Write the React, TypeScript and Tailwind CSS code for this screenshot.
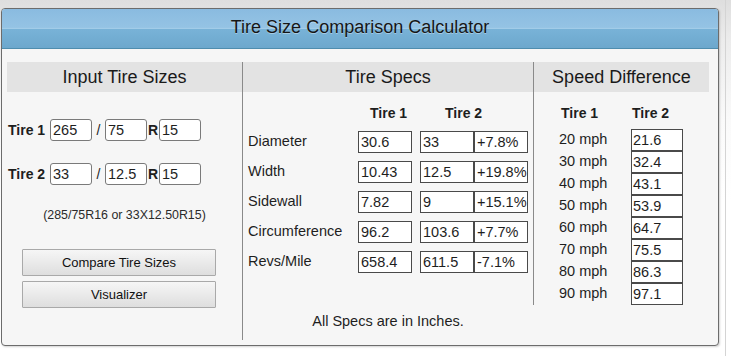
import React from "react";

const specs: [string, string, string, string][] = [
  ["Diameter", "30.6", "33", "+7.8%"],
  ["Width", "10.43", "12.5", "+19.8%"],
  ["Sidewall", "7.82", "9", "+15.1%"],
  ["Circumference", "96.2", "103.6", "+7.7%"],
  ["Revs/Mile", "658.4", "611.5", "-7.1%"],
];

const speeds: [string, string][] = [
  ["20", "21.6"],
  ["30", "32.4"],
  ["40", "43.1"],
  ["50", "53.9"],
  ["60", "64.7"],
  ["70", "75.5"],
  ["80", "86.3"],
  ["90", "97.1"],
];

function TireInput({ value }: { value: string }) {
  return (
    <input
      type="text"
      readOnly
      defaultValue={value}
      className="h-[22px] w-[42px] rounded-[3px] border border-[#7a7a7a] bg-white pl-[2px] text-[14.5px] leading-[20px] text-[#1e1e1e] outline-none"
    />
  );
}

function Box({ value, w, pad }: { value: string; w: string; pad: string }) {
  return (
    <div
      className={`h-[22px] ${w} border border-[#4a4a4a] bg-white ${pad} text-[14.5px] leading-[20px] text-[#1e1e1e]`}
    >
      {value}
    </div>
  );
}

function TireRow({ label, a, b, c }: { label: string; a: string; b: string; c: string }) {
  return (
    <div className="flex h-[22px] items-center pl-[1px]">
      <span className="w-[42px] text-[14px] font-bold">{label}</span>
      <TireInput value={a} />
      <span className="w-[13px] text-center text-[14px]">/</span>
      <TireInput value={b} />
      <span className="w-[12px] text-center text-[14px] font-bold">R</span>
      <TireInput value={c} />
    </div>
  );
}

export default function App() {
  return (
    <div className="flex h-[356px] w-[731px] overflow-hidden bg-[linear-gradient(to_bottom,#dedede,#ececec_40px,#fafafa_120px,#fff_200px)] font-['Liberation_Sans',Arial,sans-serif] text-[#1e1e1e]">
      <div className="ml-[1px] mt-[8px] flex h-[338px] w-[718px] flex-col overflow-hidden rounded-[4px] border border-[#6c6c6c] bg-[#f6f6f6] shadow-[1px_1px_2px_rgba(0,0,0,0.18)]">
        {/* Title bar */}
        <div className="flex h-[40px] items-center justify-center border-b border-[#4f8dae] bg-[linear-gradient(to_bottom,#8abbe0_0%,#94c3e4_47%,#a2cce8_50%,#78b2d7_52%,#6da8cd_100%)] pb-[3px] text-[18px] text-[#161616] [text-shadow:0_1px_0_rgba(255,255,255,0.35)]">
          Tire Size Comparison Calculator
        </div>

        {/* Body */}
        <div className="flex items-start pl-[5px] pt-[13px]">
          {/* Input column */}
          <div className="flex h-[278px] w-[236px] flex-col border-r border-[#8a8a8a]">
            <div className="h-[30px] bg-[#e3e3e3] text-center text-[18px] leading-[30px] text-[#1a1a1a]">
              Input Tire Sizes
            </div>
            <div className="mt-[27px] flex flex-col gap-[22px]">
              <TireRow label="Tire 1" a="265" b="75" c="15" />
              <TireRow label="Tire 2" a="33" b="12.5" c="15" />
            </div>
            <div className="mt-[23px] text-center text-[12.4px] leading-[15px] text-[#2a2a2a]">
              (285/75R16 or 33X12.50R15)
            </div>
            <div className="ml-[15px] mt-[26px] flex w-[194px] flex-col gap-[5px]">
              <button className="h-[27px] w-full rounded-[1px] border border-[#a9a9a9] bg-[linear-gradient(to_bottom,#f6f6f6,#dedede)] text-[13px] text-[#111]">
                Compare Tire Sizes
              </button>
              <button className="h-[27px] w-full rounded-[1px] border border-[#a9a9a9] bg-[linear-gradient(to_bottom,#f6f6f6,#dedede)] text-[13px] text-[#111]">
                Visualizer
              </button>
            </div>
          </div>

          {/* Tire specs column */}
          <div className="flex w-[290px] flex-col">
            <div className="h-[30px] bg-[#e3e3e3] text-center text-[18px] leading-[30px] text-[#1a1a1a]">
              Tire Specs
            </div>
            <div className="mt-[13px] flex h-[16px] items-center text-[14px] font-bold leading-[16px]">
              <span className="ml-[127px] w-[75px]">Tire 1</span>
              <span>Tire 2</span>
            </div>
            <div className="mt-[10px] flex flex-col gap-[8px]">
              {specs.map(([label, a, b, c]) => (
                <div key={label} className="flex h-[22px] items-center">
                  <span className="w-[115px] pl-[5px] text-[14.5px]">{label}</span>
                  <Box value={a} w="w-[54px]" pad="pl-[2px]" />
                  <div className="w-[8px]" />
                  <Box value={b} w="w-[54px]" pad="pl-[2px]" />
                  <Box value={c} w="w-[54px]" pad="pl-[2px]" />
                </div>
              ))}
            </div>
            <div className="mt-[40px] text-center text-[14.5px] leading-[17px]">
              All Specs are in Inches.
            </div>
          </div>

          {/* Speed column */}
          <div className="flex w-[176px] flex-col border-l border-[#8a8a8a]">
            <div className="h-[30px] bg-[#e3e3e3] text-center text-[18px] leading-[30px] text-[#1a1a1a]">
              Speed Difference
            </div>
            <div className="mt-[13px] flex h-[16px] items-center text-[14px] font-bold leading-[16px]">
              <span className="ml-[27px] w-[71px]">Tire 1</span>
              <span>Tire 2</span>
            </div>
            <div className="mt-[8px] flex flex-col">
              {speeds.map(([s, v]) => (
                <div key={s} className="flex h-[22px] items-center">
                  <span className="w-[97px] pl-[25px] text-[14.5px]">{s} mph</span>
                  <Box value={v} w="w-[52px]" pad="pl-[1px]" />
                </div>
              ))}
            </div>
          </div>
        </div>
      </div>
      <div className="ml-[6px] h-full w-[1px] bg-[#d4d4d4]" />
    </div>
  );
}
